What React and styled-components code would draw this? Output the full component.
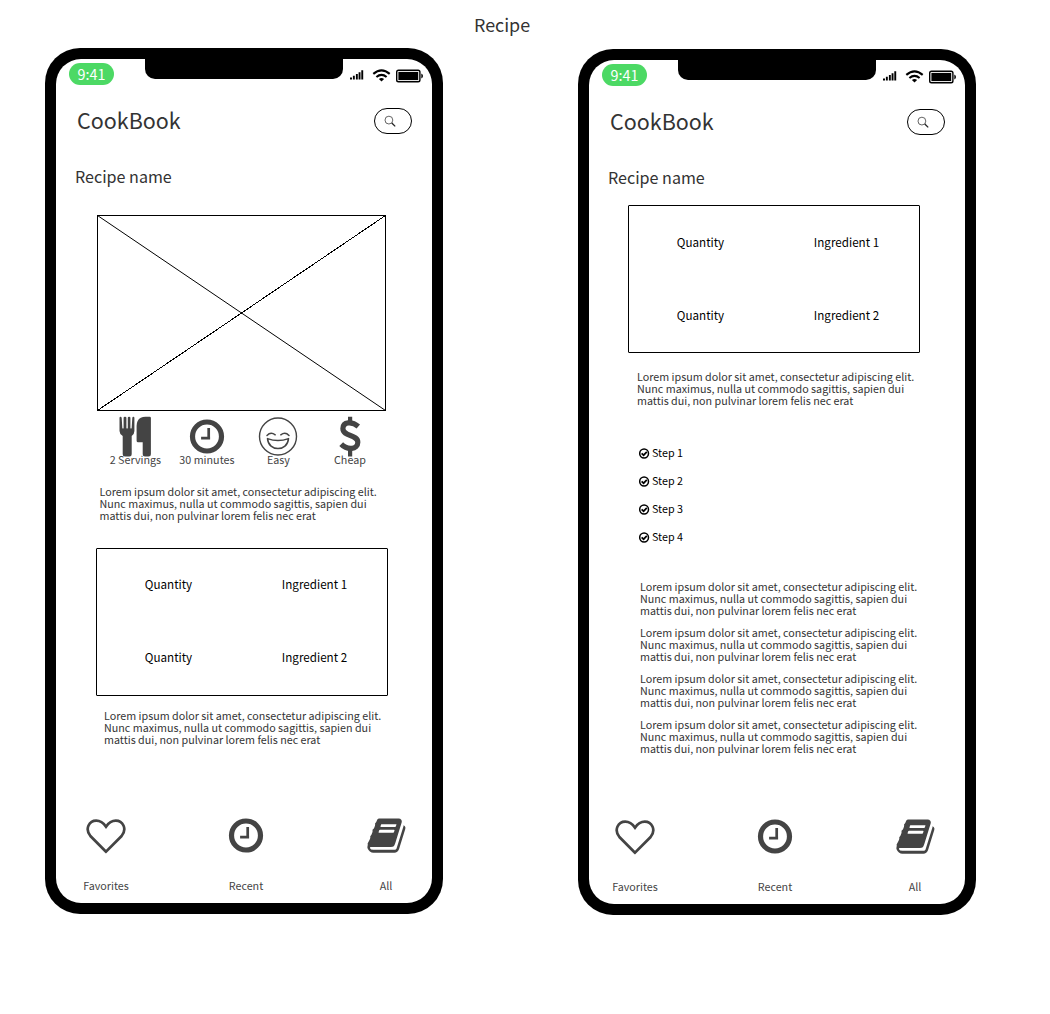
import React from 'react';
import styled, { createGlobalStyle } from 'styled-components';

const Global = createGlobalStyle`
  * { box-sizing: border-box; }
  body { margin: 0; background: #fff; color: #333; font-family: "Noto Sans CJK SC", sans-serif; }
`;

const lorem = [
  'Lorem ipsum dolor sit amet, consectetur adipiscing elit.',
  'Nunc maximus, nulla ut commodo sagittis, sapien dui',
  'mattis dui, non pulvinar lorem felis nec erat',
];

const Page = styled.main`
  width: 1050px;
  height: 1014px;
  overflow: hidden;
`;
const PageTitle = styled.h1`
  margin: 0;
  padding: 10px 0 0 474px;
  height: 48px;
  font-size: 17.9px;
  font-weight: 400;
  line-height: 28px;
`;
const Phones = styled.div`
  display: flex;
  align-items: flex-start;
  gap: 135px;
  padding-left: 45px;
`;
const Phone = styled.section`
  width: 398px;
  height: 866px;
  margin-top: ${(p) => p.$drop || 0}px;
  padding: 11px;
  background: #000;
  border-radius: 35px;
`;
const Screen = styled.div`
  display: flex;
  flex-direction: column;
  height: 844px;
  background: #fff;
  border-radius: 25px;
`;
const StatusBar = styled.header`
  display: flex;
  height: 49px;
  padding-left: 13px;
`;
const Time = styled.span`
  width: 45px;
  height: 22px;
  margin-top: 4px;
  border-radius: 11px;
  background: #4cd964;
  color: #fff;
  font-size: 14.3px;
  line-height: 21px;
  text-align: center;
`;
const Notch = styled.div`
  width: 198px;
  height: 20px;
  margin-left: 31px;
  background: #000;
  border-radius: 0 0 10px 10px;
`;
const Signals = styled.svg`
  width: 78px;
  height: 20px;
  margin: 6px 0 0 5px;
`;
const TitleBar = styled.div`
  display: flex;
  justify-content: space-between;
  height: 58px;
  padding: 0 20px 0 21px;
`;
const AppName = styled.h2`
  margin: 0;
  font-size: 21.5px;
  font-weight: 400;
  line-height: 24px;
`;
const Search = styled.button`
  width: 38px;
  height: 26px;
  padding: 0 0 0 9px;
  border: 1px solid #000;
  border-radius: 13px;
  background: #fff;
  display: flex;
  align-items: center;
`;
const RecipeName = styled.h3`
  margin: 0 0 4px 19px;
  font-size: 16.1px;
  font-weight: 400;
  line-height: 20px;
`;
const Content = styled.div`
  height: 650px;
  display: flex;
  flex-direction: column;
  align-items: flex-start;
`;
const Picture = styled.svg`
  width: 289px;
  height: 196px;
  flex: none;
  margin: 25px 0 0 41px;
`;
const Facts = styled.div`
  display: flex;
  margin: 4px 0 0 43.7px;
`;
const Fact = styled.div`
  width: 71.5px;
  height: 54px;
  display: flex;
  flex-direction: column;
  align-items: center;
  font-size: 10.74px;
  line-height: 14px;
  color: #444;
  white-space: nowrap;
  svg { flex: none; height: 42px; margin-bottom: -4px; }
`;
const Paragraph = styled.p`
  margin: ${(p) => p.$top}px 0 0 ${(p) => p.$left}px;
  font-size: 10.74px;
  line-height: 12px;
  white-space: nowrap;
`;
const Line = styled.span`
  display: block;
`;
const Ingredients = styled.div`
  display: grid;
  grid-template-columns: 143px 149px;
  grid-template-rows: 73px 73px;
  width: 292px;
  height: 148px;
  margin: ${(p) => p.$top}px 0 0 ${(p) => p.$left}px;
  border: 1px solid #000;
  border-radius: 1px;
  color: #000;
  font-size: 11.64px;
  line-height: 18px;
  place-items: center;
`;
const Cell = styled.span`
  padding-bottom: ${(p) => p.$raise}px;
`;
const Steps = styled.ul`
  display: flex;
  flex-direction: column;
  gap: 14px;
  list-style: none;
  margin: 39px 0 37px 50px;
  padding: 0;
`;
const Step = styled.li`
  display: flex;
  align-items: center;
  gap: 2px;
  height: 14px;
  color: #000;
  font-size: 10.74px;
  line-height: 14px;
`;
const Nav = styled.nav`
  display: flex;
  justify-content: space-between;
  margin: 0 16px 0 ${(p) => p.$left}px;
  width: 340px;
`;
const NavItem = styled.a`
  width: 60px;
  display: flex;
  flex-direction: column;
  align-items: center;
  gap: 22px;
  color: #444;
  font-size: 10.74px;
  line-height: 16px;
`;

const Clock = ({ shift = 0 }) => (
  <svg width="40" height="40" viewBox={`0 ${shift} 40 40`} fill="none" stroke="#444">
    <circle cx="20" cy="20" r="14.5" strokeWidth="5.200" />
    <path d="M21.700 11.500v11.300M23.100 21.700h-9" strokeWidth="2.700" />
  </svg>
);
const Heart = () => (
  <svg width="42" height="40" viewBox="0 .5 42 40" fill="none" stroke="#444" strokeWidth="2.700">
    <path d="M21 36.200L5.400 20.500C-.6 13 4.500 5.200 11.200 5.200c4.600 0 7.600 2.800 9.800 6 2.200-3.200 5.200-6 9.800-6 6.700 0 11.800 7.800 5.800 15.300Z" />
  </svg>
);
const Book = () => (
  <svg width="41" height="40" viewBox="-60 20 1792 1792" preserveAspectRatio="none" fill="#444">
    <path d="M1639 478q40 57 18 129l-275 906q-19 64-76.500 107.500t-122.500 43.500h-923q-77 0-148.500-53.500t-99.500-131.500q-24-67-2-127 0-4 3-27t4-37q1-8-3-21.500t-3-19.500q2-11 8-21t16.500-23.500 16.500-23.500q23-38 45-91.500t30-91.500q3-10 .5-30t-.5-28q3-11 17-28t17-23q21-36 42-92t25-90q1-9-2.500-32t.5-28q4-13 22-30.500t22-22.500q19-26 42.500-84.500t27.500-96.500q1-8-3-25.500t-2-26.500q2-8 9-18t18-23 17-21q8-12 16.500-30.500t15-35 16-36 19.500-32 26.500-23.500 36-11.500 47.500 5.500l-1 3q38-9 51-9h761q74 0 114 56t18 130l-274 906q-36 119-71.500 153.500t-128.500 34.500h-869q-27 0-38 15-11 16-1 43 24 70 144 70h923q29 0 56-15.500t35-41.500l300-987q7-22 5-57 38 15 59 43zm-1064 2q-4 13 2 22.500t20 9.500h608q13 0 25.500-9.500t16.500-22.500l21-64q4-13-2-22.500t-20-9.500h-608q-13 0-25.500 9.500t-16.500 22.500zm-83 256q-4 13 2 22.500t20 9.500h608q13 0 25.500-9.500t16.500-22.500l21-64q4-13-2-22.500t-20-9.500h-608q-13 0-25.500 9.500t-16.500 22.500z" />
  </svg>
);
const Cutlery = () => (
  <svg width="40" height="42" viewBox="0 0 40 42" fill="#444">
    <path d="M4.500 3q0-1.300 1-1.300t1.200 1.300l.6 9.700q.1.900.7.900t.6-.9V2.800q0-1.100 1.400-1.100t1.400 1.100v9.900q0 .9.700.9t.7-.9V2.800q0-1.100 1.300-1.100t1.300 1.100v9.900q0 .9.600.9t.7-.9l.6-9.700q.1-1.300 1.100-1.300t1 1.300V16q0 3-2.700 5v18.300q0 2.300-2.300 2.300h-4.400q-2.300 0-2.300-2.300V21Q4.500 19 4.500 16Z" />
    <path d="M30.500 1.700h4.200q1.200 0 1.200 1.200V39.300q0 2.300-2.300 2.300h-3.600q-2.300 0-2.300-2.300V27.300h-4.600q-1.500 0-1.500-1.500V11q0-6 4.200-8.200 2-1.100 4.700-1.100Z" />
  </svg>
);
const Smile = () => (
  <svg width="40" height="42" viewBox="0 0 40 42" fill="none" stroke="#444" strokeWidth="1.500" strokeLinecap="round" strokeLinejoin="round">
    <circle cx="20" cy="21.500" r="18.500" strokeWidth="1.400" />
    <path d="M9 20.400q3.800-4 8.200-.6M22.800 19.800q4.400-3.400 8.200.6" />
    <path d="M9.500 23.600q10.500 3.800 21 0C29.500 36.900 10.500 36.900 9.500 23.600Z" />
  </svg>
);
const Dollar = () => (
  <svg width="40" height="42" viewBox="0 0 40 42" fill="none" stroke="#444">
    <path d="M28.300 11.500C22 6 12.900 6.600 12.900 13.600c0 8.200 14.900 5.600 14.900 13.700 0 7.600-10.800 8-16.600 1.800" strokeWidth="5.200" />
    <path d="M20.100 1.700v6M20.100 34v7.600" strokeWidth="4.200" />
  </svg>
);
const Magnifier = () => (
  <svg width="12" height="12" viewBox="0 0 12 12" fill="none" stroke="#222">
    <circle cx="4.900" cy="5.100" r="3.900" strokeWidth=".7" />
    <path d="M7.800 8l3.400 3.400" strokeWidth="1.300" />
  </svg>
);
const Check = () => (
  <svg width="11" height="11" viewBox="0 0 11 11" fill="none" stroke="#000">
    <circle cx="5.100" cy="5.500" r="4.400" strokeWidth="1.500" />
    <path d="M2.600 5.300l2 1.900 3.200-3.300" strokeWidth="1.700" />
  </svg>
);

const Lorem = (props) => (
  <Paragraph {...props}>{lorem.map((t) => <Line key={t}>{t}</Line>)}</Paragraph>
);
const IngredientTable = ({ raise, ...props }) => (
  <Ingredients {...props}>
    <Cell $raise={raise}>Quantity</Cell><Cell $raise={raise}>Ingredient 1</Cell>
    <Cell $raise={raise}>Quantity</Cell><Cell $raise={raise}>Ingredient 2</Cell>
  </Ingredients>
);

function PhoneFrame({ drop, navLeft, children }) {
  return (
    <Phone $drop={drop}>
      <Screen>
        <StatusBar>
          <Time>9:41</Time>
          <Notch />
          <Signals viewBox="0 0 78 20" fill="#000">
            <path d="M2 12.400h2v2H2zM4.900 10.800h1.900v3.600H4.900zM7.900 9h1.900v5.400H7.900zM10.600 7.300h1.900v7.100h-1.900zM13.300 5.300h1.900v9.100h-1.900z" />
            <path d="M25.300 8.900q8.200-7 16.400 0M28.400 12q5.100-4.400 10.200 0" fill="none" stroke="#000" strokeWidth="2.100" />
            <path d="M30.900 14q2.600-2 5.200 0L33.500 16.500z" />
            <rect x="48.700" y="5.200" width="23.200" height="11.600" rx="1.800" fill="none" stroke="#000" strokeWidth="1.400" />
            <rect x="50.400" y="6.900" width="19.800" height="8.200" />
            <path d="M73.300 8.400q1.700.7 1.700 2.600t-1.700 2.600z" />
          </Signals>
        </StatusBar>
        <TitleBar>
          <AppName>CookBook</AppName>
          <Search aria-label="Search"><Magnifier /></Search>
        </TitleBar>
        <Content>
          <RecipeName>Recipe name</RecipeName>
          {children}
        </Content>
        <Nav $left={navLeft}>
          <NavItem><Heart />Favorites</NavItem>
          <NavItem><Clock shift={0.5} />Recent</NavItem>
          <NavItem><Book />All</NavItem>
        </Nav>
      </Screen>
    </Phone>
  );
}

export default function App() {
  return (
    <Page>
      <Global />
      <PageTitle>Recipe</PageTitle>
      <Phones>
        <PhoneFrame navLeft={20}>
          <Picture viewBox="0 0 289 196" fill="none" stroke="#000">
            <rect x=".5" y=".5" width="288" height="195" />
            <path d="M.5.5l288 195" />
            <path d="M288.500.5L.5 195.500" shapeRendering="crispEdges" />
          </Picture>
          <Facts>
            <Fact><Cutlery />2 Servings</Fact>
            <Fact><Clock shift={-0.5} />30 minutes</Fact>
            <Fact><Smile />Easy</Fact>
            <Fact><Dollar />Cheap</Fact>
          </Facts>
          <Lorem $top={17} $left={43.5} />
          <IngredientTable raise={3} $top={26} $left={40} />
          <Lorem $top={14} $left={48} />
        </PhoneFrame>
        <PhoneFrame drop={1} navLeft={16}>
          <IngredientTable raise={1} $top={14} $left={39} />
          <Lorem $top={18} $left={48} />
          <Steps>
            {[1, 2, 3, 4].map((n) => <Step key={n}><Check />Step {n}</Step>)}
          </Steps>
          <Lorem $top={0} $left={51} />
          <Lorem $top={10} $left={51} />
          <Lorem $top={10} $left={51} />
          <Lorem $top={10} $left={51} />
        </PhoneFrame>
      </Phones>
    </Page>
  );
}
